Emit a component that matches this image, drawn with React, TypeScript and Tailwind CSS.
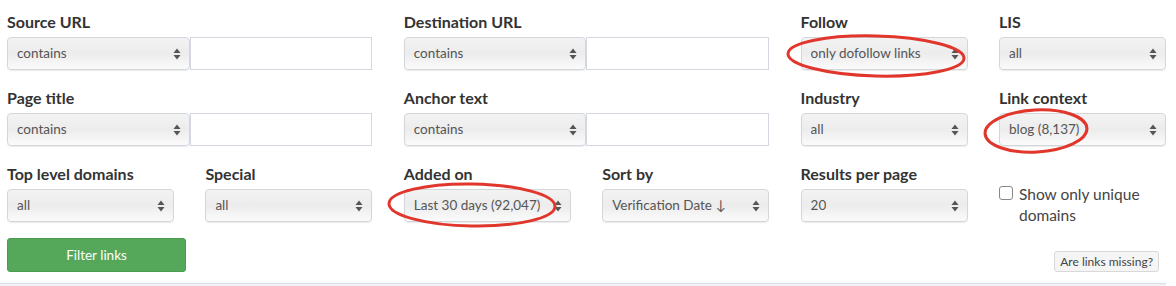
import React from "react";

const font = { fontFamily: "Lato, 'Open Sans', 'Liberation Sans', sans-serif" };

function Arrows() {
  return (
    <svg width="8" height="12" viewBox="0 0 8 12" className="shrink-0">
      <path d="M4 0.5 L7.5 5 L0.5 5 Z" fill="#555" />
      <path d="M4 11.5 L7.5 7 L0.5 7 Z" fill="#555" />
    </svg>
  );
}

function Select({ value, className = "" }: { value: string; className?: string }) {
  return (
    <div
      className={`flex h-[33px] items-center justify-between rounded-[4px] border border-[#d3d7dc] bg-gradient-to-b from-[#f3f3f3] via-[#ececec] to-[#fbfbfb] pl-[9px] pr-[8px] text-[13.5px] text-[#555] shadow-[0_1px_1px_rgba(0,0,0,0.08)] ${className}`}
    >
      <span className="truncate">{value}</span>
      <Arrows />
    </div>
  );
}

function Label({ children }: { children: React.ReactNode }) {
  return <div className="h-[20px] text-[16px] font-bold leading-[20px] text-[#333]">{children}</div>;
}

function Field({ label, value, className = "" }: { label: string; value: string; className?: string }) {
  return (
    <div className={`flex flex-col gap-[5px] ${className}`}>
      <Label>{label}</Label>
      <Select value={value} />
    </div>
  );
}

function TextField({ label, className = "" }: { label: string; className?: string }) {
  return (
    <div className={`flex flex-col gap-[5px] ${className}`}>
      <Label>{label}</Label>
      <div className="flex">
        <Select value="contains" className="w-1/2" />
        <div className="h-[33px] w-1/2 border border-[#d3d8e0] bg-white" />
      </div>
    </div>
  );
}

export default function App() {
  return (
    <div className="relative h-[286px] w-[1176px] overflow-hidden bg-white" style={font}>
      <div className="px-[7px] pt-[12px]">
        <div className="grid grid-cols-[repeat(6,167px)] gap-x-[31.4px] gap-y-[18px]">
          <TextField label="Source URL" className="col-span-2" />
          <TextField label="Destination URL" className="col-span-2" />
          <Field label="Follow" value="only dofollow links" />
          <Field label="LIS" value="all" />

          <TextField label="Page title" className="col-span-2" />
          <TextField label="Anchor text" className="col-span-2" />
          <Field label="Industry" value="all" />
          <Field label="Link context" value="blog (8,137)" />

          <Field label="Top level domains" value="all" />
          <Field label="Special" value="all" />
          <Field label="Added on" value="Last 30 days (92,047)" />
          <Field label="Sort by" value="Verification Date ↓" />
          <Field label="Results per page" value="20" />
          <div className="h-[58px] pt-[20px]">
            <label className="flex items-start gap-[6px] text-[15.5px] leading-[21px] text-[#444]">
              <span className="mt-[2px] h-[14px] w-[14px] shrink-0 rounded-[3px] border border-[#888] bg-white" />
              <span>
                Show only unique
                <br />
                domains
              </span>
            </label>
          </div>
        </div>

        <div className="mt-[16px] flex items-end justify-between">
          <button className="h-[34px] w-[179px] rounded-[3px] border border-[#4a9a4f] bg-[#55a75a] text-[13.5px] text-white">
            Filter links
          </button>
          <button className="mr-[10px] h-[21px] rounded-[3px] border border-[#d8d8d8] bg-[#f5f5f5] px-[5px] text-[12px] leading-[19px] text-[#444]">
            Are links missing?
          </button>
        </div>
      </div>

      <div className="mt-[11px] h-[4px] w-[1166px] border-t border-[#dde1e6] bg-[#eef1f5]" />

      <svg className="pointer-events-none absolute left-0 top-0" width="1176" height="286">
        <ellipse cx="876" cy="56" rx="88" ry="20" fill="none" stroke="#e0362c" strokeWidth="3" transform="rotate(1.5 876 56)" />
        <ellipse cx="1036" cy="131" rx="51" ry="21" fill="none" stroke="#e0362c" strokeWidth="3" transform="rotate(-3 1036 131)" />
        <ellipse cx="472" cy="205" rx="83" ry="21" fill="none" stroke="#e0362c" strokeWidth="3" transform="rotate(1 472 205)" />
      </svg>
    </div>
  );
}
